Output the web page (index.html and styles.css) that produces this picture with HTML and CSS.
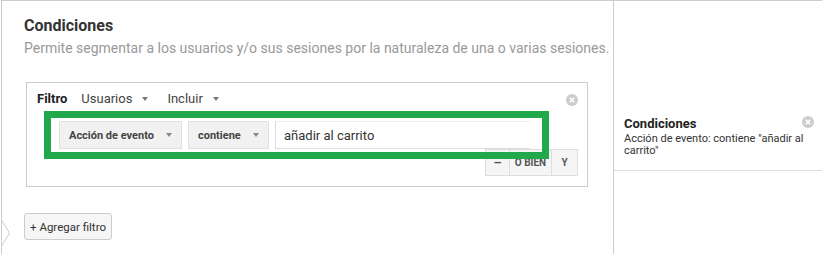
FILE: index.html
```html
<!DOCTYPE html>
<html lang="es">
<head>
    <meta charset="UTF-8">
    <title>Condiciones</title>
    <link rel="stylesheet" href="styles.css">
</head>
<body>

<div class="segment-page">
    <svg class="segment-notch" width="10" height="26" viewBox="0 0 10 26">
        <polyline points="0.5,0 8.5,13 0.5,26" fill="#fff" stroke="#ccc" stroke-width="1"/>
    </svg>

    <div class="segment-main">
        <h2 class="segment-title">Condiciones</h2>
        <p class="segment-desc">Permite segmentar a los usuarios y/o sus sesiones por la naturaleza de una o varias sesiones.</p>

        <div class="filter-box">
            <div class="filter-head">
                <span class="filter-label">Filtro</span>
                <span class="filter-menu">Usuarios <i class="caret"></i></span>
                <span class="filter-menu">Incluir <i class="caret"></i></span>
                <svg class="close-icon filter-close" width="12" height="12" viewBox="0 0 12 12">
                    <circle cx="6" cy="6" r="6" fill="#ccc"/>
                    <path d="M3.8 3.8 L8.2 8.2 M8.2 3.8 L3.8 8.2" stroke="#fff" stroke-width="1.6"/>
                </svg>
            </div>

            <div class="condition-row">
                <button class="select-btn select-dim">Acción de evento <i class="caret"></i></button>
                <button class="select-btn select-op">contiene <i class="caret"></i></button>
                <div class="value-input">añadir al carrito</div>
            </div>

            <div class="condition-actions">
                <button class="action-btn action-minus">&ndash;</button>
                <button class="action-btn action-or">O BIEN</button>
                <button class="action-btn action-and">Y</button>
            </div>

            <!-- annotation highlight drawn over the row -->
            <div class="highlight"></div>
        </div>

        <button class="add-filter">+ Agregar filtro</button>
    </div>

    <div class="segment-side">
        <div class="summary-card">
            <div class="summary-title">Condiciones</div>
            <div class="summary-text">Acción de evento: contiene "añadir al carrito"</div>
            <svg class="close-icon summary-close" width="12" height="12" viewBox="0 0 12 12">
                <circle cx="6" cy="6" r="6" fill="#ccc"/>
                <path d="M3.8 3.8 L8.2 8.2 M8.2 3.8 L3.8 8.2" stroke="#fff" stroke-width="1.6"/>
            </svg>
        </div>
    </div>
</div>

</body>
</html>
```

FILE: styles.css
```css
body {
    margin: 0;
    padding: 0;
    font-family: Roboto, "Liberation Sans", Arial, sans-serif;
    color: #333;
    background-color: #fff;
}
.segment-page {
    position: relative;
    display: flex;
    height: 253px;
    margin-left: 1px;
    border-top: 1px solid #ccc;
    border-left: 1px solid #ccc;
    overflow: hidden;
}
.segment-notch {
    position: absolute;
    left: -1px;
    top: 219px;
}
.segment-main {
    width: 589px;
    padding: 15px 0 0 22px;
}
.segment-title {
    margin: 0;
    font-size: 16px;
    line-height: 20px;
    font-weight: 700;
    color: #333;
}
.segment-desc {
    margin: 3px 0 0 0;
    font-size: 14px;
    line-height: 18px;
    color: #999;
}
.filter-box {
    position: relative;
    margin: 25px 0 0 2px;
    border: 1px solid #ccc;
    padding: 8px 9px 10px 10px;
    width: 541px;
}
.filter-head {
    display: flex;
    align-items: center;
    height: 16px;
    font-size: 13px;
    line-height: 16px;
}
.filter-label {
    font-weight: 700;
    color: #222;
    margin-right: 14px;
}
.filter-menu {
    display: flex;
    align-items: center;
    color: #444;
    margin-right: 19px;
}
.caret {
    display: inline-block;
    width: 0;
    height: 0;
    border-left: 3.5px solid transparent;
    border-right: 3.5px solid transparent;
    border-top: 4px solid #777;
    margin-left: 10px;
}
.filter-close {
    margin-left: auto;
    margin-top: 2px;
}
.condition-row {
    display: flex;
    align-items: stretch;
    height: 28px;
    margin: 14px 0 0 22px;
}
.select-btn {
    display: flex;
    align-items: center;
    justify-content: space-between;
    box-sizing: border-box;
    height: 28px;
    padding: 0 9px 0 9px;
    margin-right: 6px;
    font-family: inherit;
    font-size: 11px;
    font-weight: 700;
    color: #444;
    background-color: #f1f1f1;
    border: 1px solid #e0e0e0;
    border-radius: 0;
}
.select-btn .caret {
    border-top-color: #888;
}
.select-dim {
    width: 123px;
}
.select-op {
    width: 81px;
}
.value-input {
    box-sizing: border-box;
    width: 255px;
    height: 28px;
    padding: 0 8px;
    font-size: 13px;
    line-height: 27px;
    color: #333;
    border: 1px solid #ddd;
    border-top-color: #eee;
    border-right: none;
}
.condition-actions {
    display: flex;
    justify-content: flex-end;
    height: 27px;
}
.action-btn {
    box-sizing: border-box;
    height: 27px;
    padding: 0;
    margin-left: -1px;
    font-family: inherit;
    font-size: 10px;
    font-weight: 700;
    color: #555;
    background-color: #f5f5f5;
    border: 1px solid #ddd;
    border-radius: 0;
}
.action-minus {
    width: 25px;
    font-size: 13px;
}
.action-or {
    width: 43px;
}
.action-and {
    width: 27px;
}
.highlight {
    position: absolute;
    left: 17px;
    top: 28px;
    width: 491px;
    height: 34px;
    border: 7px solid #20a84a;
}
.add-filter {
    display: block;
    box-sizing: border-box;
    width: 88px;
    height: 27px;
    margin-top: 26px;
    padding: 0;
    font-family: inherit;
    font-size: 11.5px;
    color: #333;
    background-color: #f6f6f6;
    border: 1px solid #ccc;
    border-radius: 3px;
}
.segment-side {
    flex: 1;
    border-left: 1px solid #ccc;
}
.summary-card {
    position: relative;
    margin-top: 115px;
    padding: 0 10px 13px 10px;
    border-bottom: 1px solid #ddd;
}
.summary-title {
    font-size: 13px;
    line-height: 16px;
    font-weight: 700;
    color: #222;
}
.summary-text {
    margin-top: 1px;
    font-size: 11px;
    line-height: 12px;
    color: #333;
}
.summary-close {
    position: absolute;
    right: 8px;
    top: 0;
}
```
